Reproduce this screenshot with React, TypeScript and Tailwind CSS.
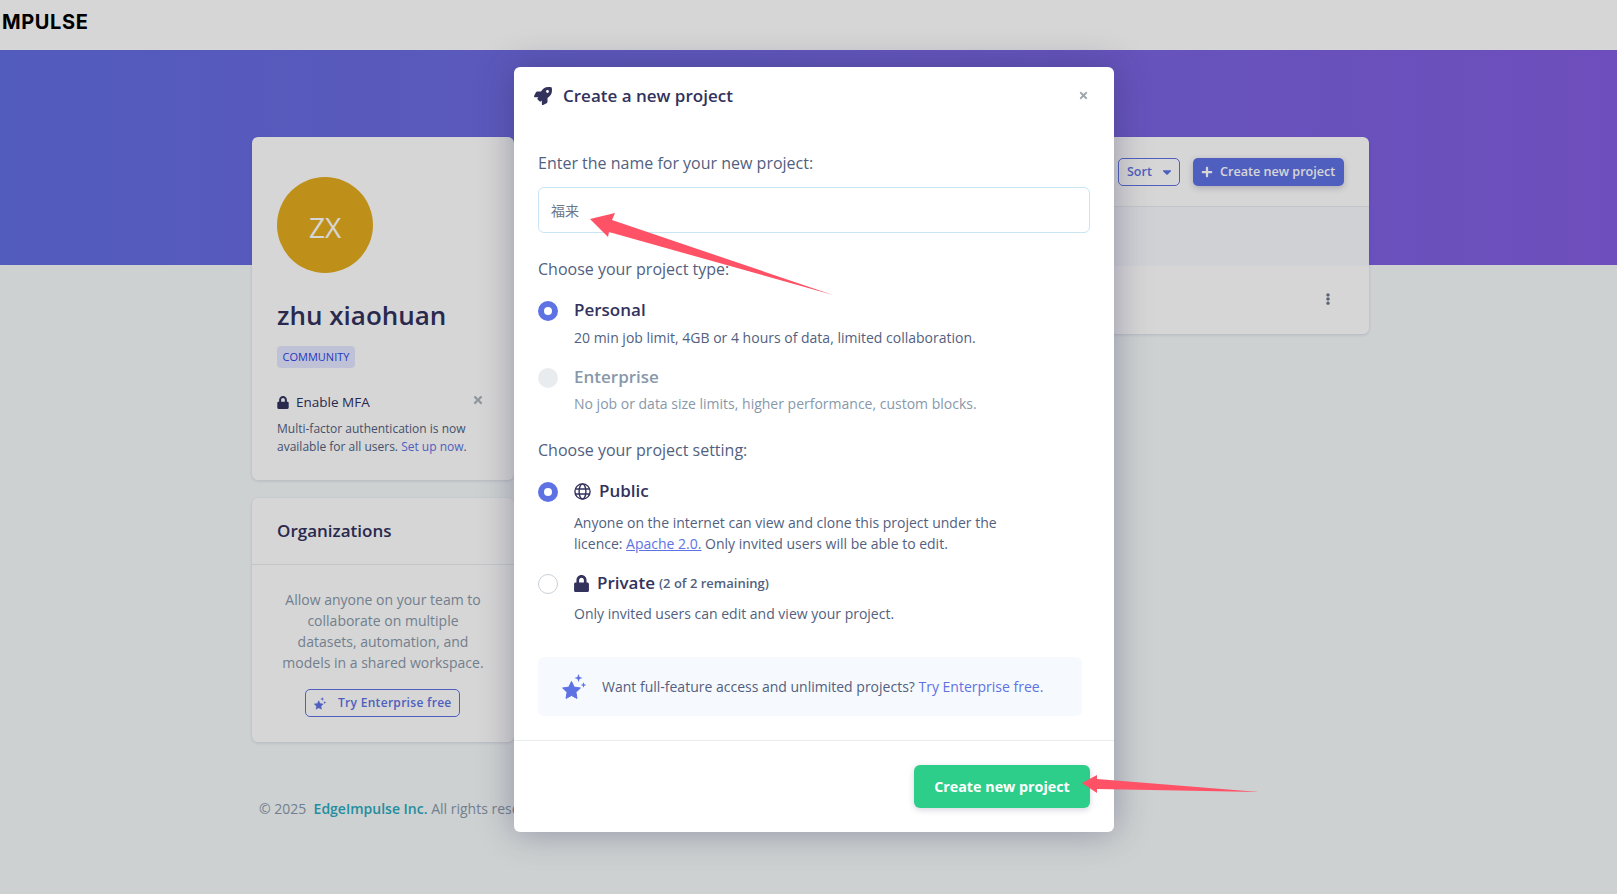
import { FaRocket, FaLock, FaPlus, FaCaretDown, FaEllipsisV, FaTimes } from "react-icons/fa";

function Sparkle({ className }: { className: string }) {
  return (
    <svg viewBox="0 0 26 26" className={className} fill="currentColor">
      <path d="M9.5 7.5l2.7 5.6 6.2.9-4.5 4.3 1.1 6.1-5.5-2.9-5.5 2.9 1.1-6.1L.6 14l6.2-.9z" stroke="currentColor" strokeWidth="1" strokeLinejoin="round" />
      <path d="M16.5 0l1.1 2.9 2.9 1.1-2.9 1.1-1.1 2.9-1.1-2.9-2.9-1.1 2.9-1.1z" />
      <path d="M21.5 8.2l.8 2 2 .8-2 .8-.8 2-.8-2-2-.8 2-.8z" />
    </svg>
  );
}

function GlobeIcon() {
  return (
    <svg viewBox="0 0 17 17" className="h-[17px] w-[17px]" fill="none" stroke="currentColor" strokeWidth="1.4">
      <circle cx="8.5" cy="8.5" r="7.6" />
      <ellipse cx="8.5" cy="8.5" rx="3.4" ry="7.6" />
      <path d="M1.4 6h14.2M1.4 11h14.2" />
    </svg>
  );
}

function Radio({ state }: { state: "on" | "off" | "disabled" }) {
  if (state === "on")
    return (
      <span className="flex h-5 w-5 shrink-0 items-center justify-center rounded-full bg-[#5e72e4]">
        <span className="h-2 w-2 rounded-full bg-white" />
      </span>
    );
  if (state === "disabled") return <span className="block h-5 w-5 shrink-0 rounded-full bg-[#e9ecef]" />;
  return <span className="block h-5 w-5 shrink-0 rounded-full border border-[#cad1d7] bg-white" />;
}

export default function App() {
  return (
    <div
      className="relative h-[894px] w-full overflow-hidden bg-[#f5f9fa] text-[#525f7f]"
      style={{ fontFamily: '"Open Sans", "Noto Sans CJK SC", sans-serif' }}
    >
      <header className="flex h-[50px] items-center bg-white pb-[6px] pl-[2px]">
        <span className="text-[20px] font-bold tracking-[0.6px] text-black" style={{ fontFamily: "Inter, sans-serif" }}>
          MPULSE
        </span>
      </header>
      <div className="h-[215px] bg-gradient-to-r from-[#626ee1] to-[#835ee1]" />

      <main className="-mt-[128px] ml-[252px] flex w-[1117px] gap-4">
        <div className="flex w-[262px] shrink-0 flex-col gap-[18px]">
          <section className="h-[343px] rounded-md bg-white px-[25px] pt-10 shadow-[0_1px_3px_rgba(50,50,93,0.15)]">
            <div className="flex h-24 w-24 items-center justify-center rounded-full bg-[#e3ac1e] pt-1 text-[28px] text-white">
              ZX
            </div>
            <h1 className="mt-[23px] text-[26px] leading-[38px] font-semibold text-[#32325d]">zhu xiaohuan</h1>
            <span className="mt-[12px] inline-flex h-[22px] w-[78px] items-center justify-center rounded bg-[#e4e8ff] text-[11px] text-[#2b44e7]">
              COMMUNITY
            </span>
            <div className="mt-[24px] flex items-center text-[13.5px] font-medium text-[#32325d]">
              <FaLock className="h-[13px] w-[12px]" />
              <span className="ml-[7px]">Enable MFA</span>
              <FaTimes className="ml-auto mr-[5px] h-[12px] w-[12px] -translate-y-[2px] text-[#adb5bd]" />
            </div>
            <p className="mt-[8px] text-[12px] leading-[18px]">
              Multi-factor authentication is now available for all users.{" "}
              <span className="text-[#5e72e4]">Set up now</span>.
            </p>
          </section>
          <section className="h-[244px] rounded-md bg-white shadow-[0_1px_3px_rgba(50,50,93,0.15)]">
            <div className="flex h-[67px] items-center border-b border-[#e9ecef] px-[25px] text-[17px] font-semibold text-[#32325d]">
              Organizations
            </div>
            <div className="flex flex-col items-center px-6 pt-[24px]">
              <p className="w-[206px] text-center text-[14px] leading-[21px] text-[#8898aa]">
                Allow anyone on your team to collaborate on multiple datasets, automation, and models in a shared workspace.
              </p>
              <button className="mt-[16px] -ml-[1px] flex h-[28px] w-[155px] items-center rounded-[5px] border border-[#5e72e4] pl-2 text-[12px] font-semibold whitespace-nowrap text-[#5e72e4]">
                <Sparkle className="h-[13px] w-[13px] shrink-0" />
                <span className="ml-[11px] tracking-[0.3px]">Try Enterprise free</span>
              </button>
            </div>
          </section>
          <footer className="mt-[38px] ml-[7px] whitespace-nowrap text-[14px] text-[#8898aa]">
            © 2025&nbsp; <span className="font-semibold text-[#2ba9bd]">EdgeImpulse Inc.</span> All rights reserved.
          </footer>
        </div>

        <section className="h-[197px] flex-1 rounded-md bg-white shadow-[0_1px_3px_rgba(50,50,93,0.15)]">
          <div className="flex h-[70px] items-center justify-end gap-[13px] border-b border-[#e9ecef] pr-[25px]">
            <button className="flex h-[28px] w-[62px] items-center justify-between rounded-[5px] border border-[#5e72e4] pt-px pr-[5px] pl-2 text-[12.5px] font-semibold text-[#5e72e4]">
              Sort <FaCaretDown className="h-[14px] w-[14px]" />
            </button>
            <button className="flex h-[28px] w-[151px] items-center gap-[7px] rounded-[5px] bg-[#5e72e4] pt-px pl-2 text-[12.6px] font-semibold text-white shadow-[0_2px_6px_rgba(50,50,93,0.25)]">
              <FaPlus className="h-[12px] w-[12px]" /> Create new project
            </button>
          </div>
          <div className="h-[59px] bg-[#f8f9fe]" />
          <div className="flex h-[68px] items-center justify-end pr-[37px] pb-[2px] text-[#8898aa]">
            <FaEllipsisV className="h-[12px] w-[8px] text-[#6b7688]" />
          </div>
        </section>
      </main>

      <div className="absolute inset-0 bg-black/16" />

      <div className="absolute top-[67px] left-[514px] h-[765px] w-[600px] rounded-md bg-white shadow-[0_0_35px_rgba(50,50,93,0.4)]">
        <div className="flex h-[56px] items-center pr-[25px] pl-[20px] pt-[1px]">
          <FaRocket className="h-[18px] w-[18px] text-[#32325d]" />
          <span className="ml-[11px] text-[17px] font-semibold text-[#32325d]">Create a new project</span>
          <FaTimes className="ml-auto h-[11px] w-[11px] text-[#a0a6b0]" />
        </div>

        <div className="px-6 pt-[27px]">
          <label className="block text-[16px] leading-[26px]">Enter the name for your new project:</label>
          <div className="mt-[11px] flex h-[46px] w-[552px] items-center rounded-md border border-[#c9e5f5] pl-3 text-[14px] text-[#6b7688]">
            福来
          </div>

          <div className="mt-[23px] text-[16px] leading-[26px]">Choose your project type:</div>

          <div className="mt-[15px] flex">
            <div className="pt-[4px]"><Radio state="on" /></div>
            <div className="ml-4">
              <div className="text-[17px] leading-[26px] font-semibold text-[#32325d]">Personal</div>
              <div className="mt-[4px] text-[14px] leading-[21px]">20 min job limit, 4GB or 4 hours of data, limited collaboration.</div>
            </div>
          </div>

          <div className="mt-[16px] flex">
            <div className="pt-[4px]"><Radio state="disabled" /></div>
            <div className="ml-4">
              <div className="text-[17px] leading-[26px] font-semibold text-[#8898aa]">Enterprise</div>
              <div className="mt-[3px] text-[14px] leading-[21px] text-[#8898aa]">No job or data size limits, higher performance, custom blocks.</div>
            </div>
          </div>

          <div className="mt-[23px] text-[16px] leading-[26px]">Choose your project setting:</div>

          <div className="mt-[15px] flex">
            <div className="pt-[4px]"><Radio state="on" /></div>
            <div className="ml-4">
              <div className="flex items-center text-[17px] leading-[26px] font-semibold text-[#32325d]">
                <GlobeIcon />
                <span className="ml-[8px]">Public</span>
              </div>
              <div className="mt-[8px] w-[430px] text-[14px] leading-[21px]">
                Anyone on the internet can view and clone this project under the licence:{" "}
                <span className="text-[#5e72e4] underline">Apache 2.0.</span> Only invited users will be able to edit.
              </div>
            </div>
          </div>

          <div className="mt-[16px] flex">
            <div className="pt-[4px]"><Radio state="off" /></div>
            <div className="ml-4">
              <div className="flex items-center leading-[26px] font-semibold text-[#32325d]">
                <FaLock className="h-[17px] w-[15px]" />
                <span className="ml-[8px] text-[17px]">Private</span>
                <span className="ml-[4px] text-[13px] text-[#525f7f]">(2 of 2 remaining)</span>
              </div>
              <div className="mt-[7px] text-[14px] leading-[21px]">Only invited users can edit and view your project.</div>
            </div>
          </div>

          <div className="mt-[33px] flex h-[59px] w-[544px] items-center rounded-md bg-[#f6f9fd] pl-6 text-[14px]">
            <Sparkle className="h-[26px] w-[26px] text-[#5e72e4]" />
            <span className="ml-[14px]">
              Want full-feature access and unlimited projects? <span className="text-[#5e72e4]">Try Enterprise free.</span>
            </span>
          </div>
        </div>

        <div className="mt-[24px] flex justify-end border-t border-[#e9ecef] px-6 pt-[24px]">
          <button className="h-[43px] w-[176px] rounded-md bg-[#2dce89] text-[14.3px] font-bold text-white shadow-[0_2px_6px_rgba(50,50,93,0.2)]">
            Create new project
          </button>
        </div>
      </div>

      <svg className="pointer-events-none absolute inset-0 h-[894px] w-[1617px]" viewBox="0 0 1617 894">
        <polygon points="590,219 615,213 612,220 833,295 609,232 608,237" fill="#ff5266" />
        <polygon points="1082,783 1097,775 1097,779 1259,792 1097,789 1097,793" fill="#ff5266" />
      </svg>
    </div>
  );
}
